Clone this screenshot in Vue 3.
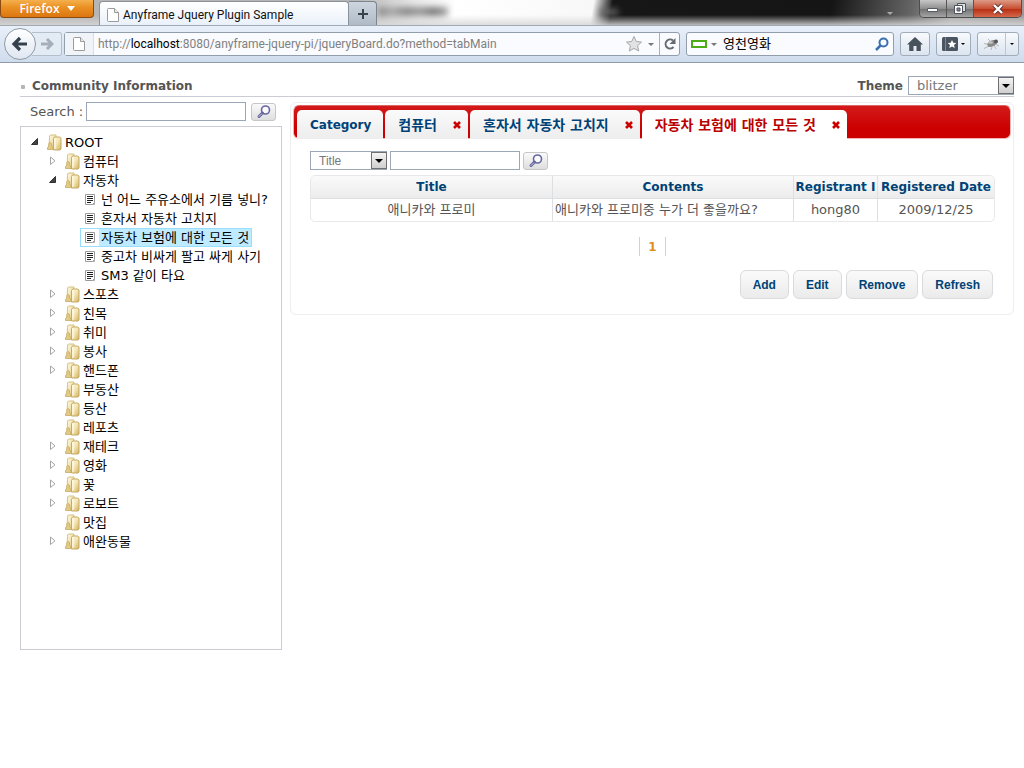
<script setup>
import { ref } from 'vue'

const url = ref('')
const engineQuery = ref('영천영화')
const treeQuery = ref('')
const gridQuery = ref('')
const theme = ref('blitzer')
const field = ref('Title')

const tabs = [
  { label: 'Category', closable: false },
  { label: '컴퓨터', closable: true },
  { label: '혼자서 자동차 고치지', closable: true },
  { label: '자동차 보험에 대한 모든 것', closable: true, active: true },
]

const tree = [
  { label: '컴퓨터', state: 'closed' },
  {
    label: '자동차',
    state: 'open',
    children: [
      { label: '넌 어느 주유소에서 기름 넣니?' },
      { label: '혼자서 자동차 고치지' },
      { label: '자동차 보험에 대한 모든 것', selected: true },
      { label: '중고차 비싸게 팔고 싸게 사기' },
      { label: 'SM3 같이 타요' },
    ],
  },
  { label: '스포츠', state: 'closed' },
  { label: '친목', state: 'closed' },
  { label: '취미', state: 'closed' },
  { label: '봉사', state: 'closed' },
  { label: '핸드폰', state: 'closed' },
  { label: '부동산' },
  { label: '등산' },
  { label: '레포츠' },
  { label: '재테크', state: 'closed' },
  { label: '영화', state: 'closed' },
  { label: '꽃', state: 'closed' },
  { label: '로보트', state: 'closed' },
  { label: '맛집' },
  { label: '애완동물', state: 'closed' },
]

const rows = [
  { title: '애니카와 프로미', contents: '애니카와 프로미중 누가 더 좋을까요?', id: 'hong80', date: '2009/12/25' },
]
const actions = ['Add', 'Edit', 'Remove', 'Refresh']
</script>

<template>
  <svg class="defs" aria-hidden="true">
    <defs>
      <linearGradient id="gold" x1="0" y1="0" x2="1" y2="1">
        <stop offset="0" stop-color="#fffbe6" />
        <stop offset="0.5" stop-color="#f3e3b0" />
        <stop offset="1" stop-color="#cfae5e" />
      </linearGradient>
      <symbol id="folder" viewBox="0 0 18 17">
        <path d="M4.500 3.500V2l1-1H11v12l-5 1.500H4z" fill="url(#gold)" stroke="#d4c182" />
        <path d="M2.500 15.500v-1.700l1.300-1.800V9.500L5 8.300l1.500 1.200v2.300L8 14v1.500z" fill="#e2cb87" stroke="#c6aa60" stroke-width=".8" />
        <path d="M8.500 4.500l1-1.500h5l1.500 1v11l-1 1H8.500z" fill="url(#gold)" stroke="#c4aa62" />
        <path d="M10 5v9.500" stroke="#fffdf0" />
      </symbol>
      <symbol id="page" viewBox="0 0 18 17">
        <path d="M4.500 3.500h9v8l-2 2h-7z" fill="#fff" stroke="#9a9a9a" />
        <path d="M6 5.500h6M6 7.500h6M6 9.500h6M6 11.500h4" stroke="#222" />
        <path d="M13.500 11v2.500H11" fill="none" stroke="#aaa" />
      </symbol>
      <symbol id="magnify" viewBox="0 0 16 16">
        <circle cx="9.500" cy="6" r="4" fill="#fbfbff" stroke="#6666a0" stroke-width="1.600" />
        <path d="M6.500 9L3 12.500" stroke="#6666a0" stroke-width="3" stroke-linecap="round" />
        <path d="M5.500 10L3 12.500" stroke="#c8c8e0" stroke-linecap="round" />
      </symbol>
      <symbol id="blank" viewBox="0 0 14 16">
        <path d="M2.500 1.500h6l4 4v9h-10a1 1 0 0 1-1-1v-11a1 1 0 0 1 1-1z" fill="#fff" stroke="#9a9a9a" />
        <path d="M8.500 1.500v4h4" fill="#eee" stroke="#9a9a9a" />
      </symbol>
    </defs>
  </svg>

  <header class="browser">
    <div class="titlebar">
      <span class="smear"></span><span class="smear faint"></span>
      <button class="firefox">Firefox <i class="tri white"></i></button>
      <div class="window-tab">
        <svg width="14" height="16"><use href="#blank" /></svg>
        <span>Anyframe Jquery Plugin Sample</span>
      </div>
      <button class="new-tab" aria-label="New tab">
        <svg width="12" height="12"><path d="M6 1v10M1 6h10" stroke="#39434d" stroke-width="2" /></svg>
      </button>
      <span class="spring"></span>
      <i class="tri dim"></i>
      <div class="window-buttons">
        <button aria-label="Minimize"><svg width="14" height="12"><path d="M1.500 5.500h10v3h-10z" fill="#fff" stroke="#555a66" /></svg></button>
        <button aria-label="Restore"><svg width="14" height="14"><path d="M4.500 1.500h8v8h-8z" fill="#ddd" stroke="#4c5260" /><path d="M1.500 3.500h8v8h-8z" fill="#fff" stroke="#4c5260" /><path d="M4 6h3v3H4z" fill="#888" stroke="#4c5260" /></svg></button>
        <button class="close" aria-label="Close"><svg width="14" height="12"><path d="M3 2l8 8M11 2l-8 8" stroke="#5c3030" stroke-width="4" /><path d="M3 2l8 8M11 2l-8 8" stroke="#fff" stroke-width="2.400" /></svg></button>
      </div>
    </div>

    <div class="navbar">
      <div class="history">
        <button class="back" aria-label="Back"><svg width="18" height="16"><path d="M9 2L3 8l6 6M3.500 8H16" fill="none" stroke="#35404d" stroke-width="3.200" /></svg></button>
        <button class="forward" aria-label="Forward"><svg width="14" height="14"><path d="M7 2l5 5-5 5M11.500 7H1" fill="none" stroke="#a5afba" stroke-width="3" /></svg></button>
      </div>
      <div class="address">
        <span class="identity"><svg width="14" height="16"><use href="#blank" /></svg></span>
        <label class="url">
          <span>http://<b>localhost</b>:8080/anyframe-jquery-pi/jqueryBoard.do?method=tabMain</span>
          <input v-model="url" aria-label="Address" />
        </label>
        <svg class="star" width="18" height="18"><path d="M9 1.500l2.300 5 5.200.6-3.900 3.600 1.100 5.300L9 13.400 4.300 16l1.100-5.300L1.500 7.100l5.200-.6z" fill="#e2e2e4" stroke="#a6a6aa" /></svg>
        <i class="tri gray"></i>
        <button class="reload" aria-label="Reload"><svg width="14" height="14"><path d="M10.500 10A4.500 4.500 0 1 1 10 3.600" fill="none" stroke="#666b72" stroke-width="2" /><path d="M12.500 1v6h-6z" fill="#666b72" /></svg></button>
      </div>
      <div class="engine">
        <svg width="16" height="8"><path d="M1 1h14v6H1z" fill="#fff" stroke="#4cae14" stroke-width="2" /></svg>
        <i class="tri gray"></i>
        <input v-model="engineQuery" aria-label="Web search" />
        <svg width="14" height="14"><circle cx="8.500" cy="5.500" r="4" fill="none" stroke="#3b6fb0" stroke-width="2" /><path d="M5.500 8.500L1 13" stroke="#3b6fb0" stroke-width="2.500" /></svg>
      </div>
      <button class="tool home" aria-label="Home"><svg width="16" height="14"><path d="M8 0l8 7.500h-2.200V14H9.500V9h-3v5H2.200V7.500H0z" fill="#48525d" /></svg></button>
      <button class="tool marks" aria-label="Bookmarks"><svg width="16" height="14"><rect width="16" height="14" rx="1.500" fill="#4a5561" /><path d="M3.500 0v14" stroke="#7e8894" /><path d="M10 3l1.300 2.800 3 .3-2.300 2 .7 3L10 9.600l-2.700 1.500.7-3-2.300-2 3-.3z" fill="#fff" /></svg><i class="tri small black"></i></button>
      <div class="tool bug">
        <button aria-label="Inspect"><svg width="18" height="14"><path d="M1 11.500l5-2.500M1 6.500l5 1M5 2l3 3M8 13l1-3M13 12l-2-4M16 9l-4-2" stroke="#b5b5b5" /><ellipse cx="9" cy="6.500" rx="5" ry="3" transform="rotate(-24 9 6.500)" fill="#8a8a8a" /><circle cx="13" cy="4.500" r="2" fill="#555" /><ellipse cx="7.500" cy="5.500" rx="2.500" ry="1.300" fill="#c4c4c4" /></svg></button>
        <button aria-label="Inspect options"><i class="tri small black"></i></button>
      </div>
    </div>
  </header>

  <main class="site">
    <div class="heading">
      <i class="bullet"></i>
      <h1>Community Information</h1>
      <label for="theme">Theme</label>
      <span class="pick theme">
        <select id="theme" v-model="theme"><option>blitzer</option></select>
        <i class="drop"><i class="tri black"></i></i>
      </span>
    </div>

    <div class="columns">
      <aside>
        <form class="find" @submit.prevent>
          <label for="tree-query">Search :</label>
          <input id="tree-query" v-model="treeQuery" />
          <button class="go" aria-label="Search tree"><svg width="16" height="16"><use href="#magnify" /></svg></button>
        </form>
        <nav class="tree">
          <ul>
            <li>
              <div class="node">
                <span class="toggle"><svg width="8" height="8"><path d="M6.500 .5v6h-6z" fill="#444" stroke="#333" /></svg></span>
                <a href="#root"><svg width="18" height="17"><use href="#folder" /></svg><span>ROOT</span></a>
              </div>
              <ul>
                <li v-for="item in tree" :key="item.label">
                  <div class="node">
                    <span class="toggle">
                      <svg v-if="item.state === 'open'" width="8" height="8"><path d="M6.500 .5v6h-6z" fill="#444" stroke="#333" /></svg>
                      <svg v-else-if="item.state" width="8" height="10"><path d="M1.500 1v7.500l4.500-3.700z" fill="#fff" stroke="#a5a5a5" /></svg>
                    </span>
                    <a href="#node"><svg width="18" height="17"><use href="#folder" /></svg><span>{{ item.label }}</span></a>
                  </div>
                  <ul v-if="item.children">
                    <li v-for="child in item.children" :key="child.label">
                      <div class="node">
                        <span class="toggle"></span>
                        <a href="#leaf" :class="{ selected: child.selected }"><svg width="18" height="17"><use href="#page" /></svg><span>{{ child.label }}</span></a>
                      </div>
                    </li>
                  </ul>
                </li>
              </ul>
            </li>
          </ul>
        </nav>
      </aside>

      <section class="panel">
        <ul class="tabs">
          <li v-for="tab in tabs" :key="tab.label" :class="{ active: tab.active, closable: tab.closable }">
            <a href="#tab">{{ tab.label }}</a>
            <button v-if="tab.closable" aria-label="Close tab"><svg width="8" height="8"><path d="M1 1l6 6M7 1L1 7" stroke="#cc0000" stroke-width="2.600" /></svg></button>
          </li>
        </ul>
        <div class="body">
          <form class="filter" @submit.prevent>
            <span class="pick field">
              <select v-model="field" aria-label="Search field"><option>Title</option></select>
              <i class="drop"><i class="tri black"></i></i>
            </span>
            <input v-model="gridQuery" aria-label="Search text" />
            <button class="go" aria-label="Search list"><svg width="16" height="16"><use href="#magnify" /></svg></button>
          </form>
          <table>
            <colgroup><col /><col /><col class="c-id" /><col class="c-date" /></colgroup>
            <thead><tr><th>Title</th><th>Contents</th><th>Registrant I</th><th>Registered Date</th></tr></thead>
            <tbody>
              <tr v-for="row in rows" :key="row.id">
                <td>{{ row.title }}</td>
                <td class="left">{{ row.contents }}</td>
                <td>{{ row.id }}</td>
                <td>{{ row.date }}</td>
              </tr>
            </tbody>
          </table>
          <div class="pager"><a href="#page-1">1</a></div>
          <div class="actions"><button v-for="a in actions" :key="a">{{ a }}</button></div>
        </div>
      </section>
    </div>
  </main>
</template>

<style>
body { background: #fff; }
</style>

<style scoped>
* { box-sizing: border-box; }
button, input, select { font: inherit; color: inherit; margin: 0; padding: 0; outline: 0; }
button { display: flex; align-items: center; justify-content: center; flex: none; border: 0; background: none; }
a { color: inherit; text-decoration: none; }
ul { list-style: none; margin: 0; padding: 0; }
svg { flex: none; display: block; }
.defs { position: absolute; width: 0; height: 0; }
.tri { display: inline-block; flex: none; border: 3px solid transparent; border-top-color: currentColor; border-bottom: 0; }
.tri.white { border-width: 5px 4px 0; margin-left: 7px; }
.tri.dim { color: #aaa; margin: 12px 26px 0 0; }
.tri.gray { color: #777; }
.tri.black { color: #000; }
.tri.small { border-width: 2px 2px 0; }

.browser { font: 12px/16px Roboto, "Noto Sans CJK KR", sans-serif; }
.titlebar {
  position: relative; display: flex; align-items: flex-start; height: 25px; overflow: hidden;
  background:
    linear-gradient(to bottom, transparent 60%, rgba(215, 215, 215, .85)),
    linear-gradient(100deg, #b5b5b5 0, #b5b5b5 350px, #e9e9e9 410px, #fff 450px, #f8f8f8 585px, #171717 604px, #151515 820px, #666 900px, #aaa 940px, #999 100%);
}
.smear { position: absolute; left: 378px; top: 7px; width: 70px; height: 9px; background: linear-gradient(90deg, #888, #aaa 20%, #888 40%, #999 60%, #777 80%, #aaa); filter: blur(3px); }
.smear.faint { left: 600px; top: 9px; width: 18px; height: 6px; background: #666; filter: blur(3px); }
.firefox { position: relative; width: 94px; height: 18px; color: #fff; font-family: "Open Sans", sans-serif; font-weight: 600; border: 1px solid #8d4a10; border-top: 0; border-radius: 0 0 4px 4px; background: linear-gradient(#f5b04e, #e98f22 45%, #dc7610); }
.window-tab { position: relative; display: flex; align-items: center; gap: 3px; width: 250px; height: 25px; margin: 1px 0 0 5px; padding: 2px 0 0 6px; border: 1px solid #8b929c; border-bottom: 0; border-radius: 4px 4px 0 0; background: linear-gradient(#fff, #e9f0fa); color: #111; }
.new-tab { position: relative; width: 28px; height: 24px; margin-top: 1px; border: 1px solid #7c858f; border-left: 0; border-bottom: 0; border-radius: 0 4px 0 0; background: linear-gradient(#cdd6df, #b0bac6); }
.spring { flex: 1; }
.window-buttons { display: flex; height: 18px; margin-right: 2px; border: 1px solid #4d4d4d; border-top: 0; border-radius: 0 0 5px 5px; overflow: hidden; }
.window-buttons button { width: 27px; border-right: 1px solid #555; background: linear-gradient(#c8c8c8, #8f8f8f 50%, #6f6f6f 51%, #a5a5a5); }
.window-buttons .close { width: 47px; border: 0; background: linear-gradient(#dd9a85, #c85034 50%, #b52c10 51%, #d6664a); }

.navbar { display: flex; align-items: center; height: 38px; padding: 0 5px 0 4px; border-top: 1px solid #a0a9b4; border-bottom: 1px solid #8f9aaa; background: linear-gradient(#e8f0fa, #cfdcec); }
.history { display: flex; align-items: center; width: 60px; }
.back { z-index: 1; width: 32px; height: 32px; border: 1px solid #8f99a5; border-radius: 50%; background: linear-gradient(#fff, #dfe7f1); }
.forward { width: 30px; height: 24px; margin-left: -4px; border: 1px solid #b4bfcc; border-left: 0; border-radius: 0 3px 3px 0; background: #e3ebf5; }
.address, .engine { display: flex; align-items: center; height: 24px; border: 1px solid #929eac; border-radius: 3px; background: #f9fbfe; }
.address { flex: 1; min-width: 0; }
.identity { display: flex; align-items: center; justify-content: center; width: 29px; height: 22px; border-right: 1px solid #d9dee5; background: #f0f3f7; }
.url { position: relative; flex: 1; min-width: 0; padding-left: 4px; overflow: hidden; white-space: nowrap; color: #808080; }
.url b { font-weight: 400; color: #000; }
.url input { position: absolute; inset: 0; width: 100%; border: 0; background: none; }
.star { margin-right: 5px; }
.reload { width: 20px; height: 22px; margin-left: 5px; border-left: 1px solid #a7b0bc; }
.engine { gap: 4px; width: 208px; margin-left: 6px; padding: 0 4px; }
.engine input { flex: 1; min-width: 0; margin-left: 2px; border: 0; background: none; font-size: 13px; }
.tool { display: flex; align-items: center; justify-content: center; flex: none; height: 24px; border: 1px solid #a0acba; border-radius: 3px; background: linear-gradient(#f8fafd, #dbe4ef); }
.home { width: 30px; margin-left: 6px; }
.marks { width: 35px; margin-left: 6px; gap: 3px; }
.bug { width: 42px; margin-left: 6px; }
.bug button { flex: 1; height: 22px; }
.bug button + button { flex: none; width: 13px; border-left: 1px solid #bcc6d2; }

.site { padding: 11px 10px 0 20px; font: 12px/16px "DejaVu Sans", "Noto Sans CJK KR", sans-serif; color: #555; }
.heading { display: flex; align-items: center; height: 23px; padding-top: 1px; border-bottom: 1px solid #ccccd4; }
.bullet { width: 4px; height: 4px; margin: 2px 7px 0 1px; border-radius: 1px; background: #b5b5b5; }
h1 { flex: 1; margin: 0; font-size: 12px; line-height: 16px; font-weight: 700; }
.heading label { font-weight: 700; margin-right: 5px; }
.pick { position: relative; display: block; height: 19px; }
.pick select { appearance: none; display: block; width: 100%; height: 100%; padding: 0 18px 0 8px; border: 1px solid #9ba7b7; border-radius: 0; background: #fff; color: #777; }
.theme select { font-size: 13px; }
.drop { position: absolute; top: 1px; right: 0; bottom: 1px; width: 16px; display: flex; align-items: center; justify-content: center; border: 1px solid #707070; background: linear-gradient(#f4f4f4, #cfcfcf); pointer-events: none; }
.drop .tri { border-width: 4px 4px 0; }
.theme { width: 106px; }
.columns { display: flex; align-items: flex-start; gap: 8px; }
aside { flex: none; width: 262px; }
.find { display: flex; align-items: center; height: 29px; padding: 0 6px 0 10px; font-size: 13px; }
.find input, .filter input { height: 19px; border: 1px solid #9ba7b7; background: #fff; }
.find input { flex: 1; min-width: 0; margin: 0 5px 0 3px; }
.go { width: 25px; height: 18px; border: 1px solid #c6c6c6; border-radius: 3px; background: linear-gradient(#fafafa, #dedede); }
.tree { min-height: 524px; padding: 6px 0 0 5px; border: 1px solid #ccccd4; color: #000; font-size: 13px; }
.tree ul ul { padding-left: 18px; }
.node { display: flex; align-items: center; height: 19px; }
.toggle { display: flex; flex: none; width: 18px; height: 16px; padding: 0 0 2px 5px; align-items: center; }
.node a { display: flex; align-items: center; height: 19px; border: 1px solid transparent; padding-right: 2px; white-space: nowrap; line-height: 17px; }
.node a span { padding-left: 2px; }
.node a.selected { border-color: #99defd; background: #beebff; }
.node a.selected svg { background: #fff; }

.panel { flex: 1; min-width: 0; margin-top: 5px; padding: 2px; border: 1px solid #eee; border-radius: 6px; }
.tabs { display: flex; gap: 2px; height: 34px; padding: 4px 3px 0; border: 1px solid #f4b4b4; border-top-color: #d66; border-radius: 6px; background: linear-gradient(#d31a1a, #cc0000 70%); font-weight: 700; color: #004276; }
.tabs li { display: flex; align-items: center; height: 29px; padding: 0 12px 0 13px; border-radius: 5px 5px 0 0; background: linear-gradient(#fafafa, #ededed); white-space: nowrap; }
.tabs .closable { padding: 0 6px 0 13px; font-size: 14px; }
.tabs button { width: 10px; height: 10px; margin-left: 15px; }
.tabs .active { background: #fff; color: #b00; }
.body { padding: 12px 16px 13px 17px; }
.filter { display: flex; align-items: center; gap: 3px; height: 19px; font-family: "Liberation Sans", sans-serif; }
.filter input { width: 130px; }
.field { width: 77px; }
table { width: 100%; margin-top: 5px; table-layout: fixed; border-collapse: separate; border-spacing: 0; border: 1px solid #e8e8e8; border-radius: 5px; overflow: hidden; }
.c-id { width: 84px; }
.c-date { width: 117px; }
th, td { padding: 0; text-align: center; white-space: nowrap; overflow: hidden; border-left: 1px solid #dde0e3; }
th:first-child, td:first-child { border-left: 0; }
th { height: 23px; border-bottom: 1px solid #dde0e3; background: linear-gradient(#fafafa, #ececec); color: #004276; }
td { height: 22px; font-size: 13px; line-height: 16px; }
td.left { text-align: left; padding-left: 2px; }
.pager { display: flex; justify-content: center; margin-top: 15px; }
.pager a { height: 19px; padding: 0 8px; border: solid #d2d2d2; border-width: 0 1px; color: #e0901e; font-weight: 700; line-height: 20px; }
.actions { display: flex; justify-content: flex-end; gap: 4px; margin-top: 14px; padding-right: 2px; font-family: "Liberation Sans", sans-serif; font-weight: 700; color: #004276; }
.actions button { height: 29px; padding: 0 12px; border: 1px solid #d8dcdf; border-radius: 6px; background: linear-gradient(#fafafa, #ebebeb); }
</style>
